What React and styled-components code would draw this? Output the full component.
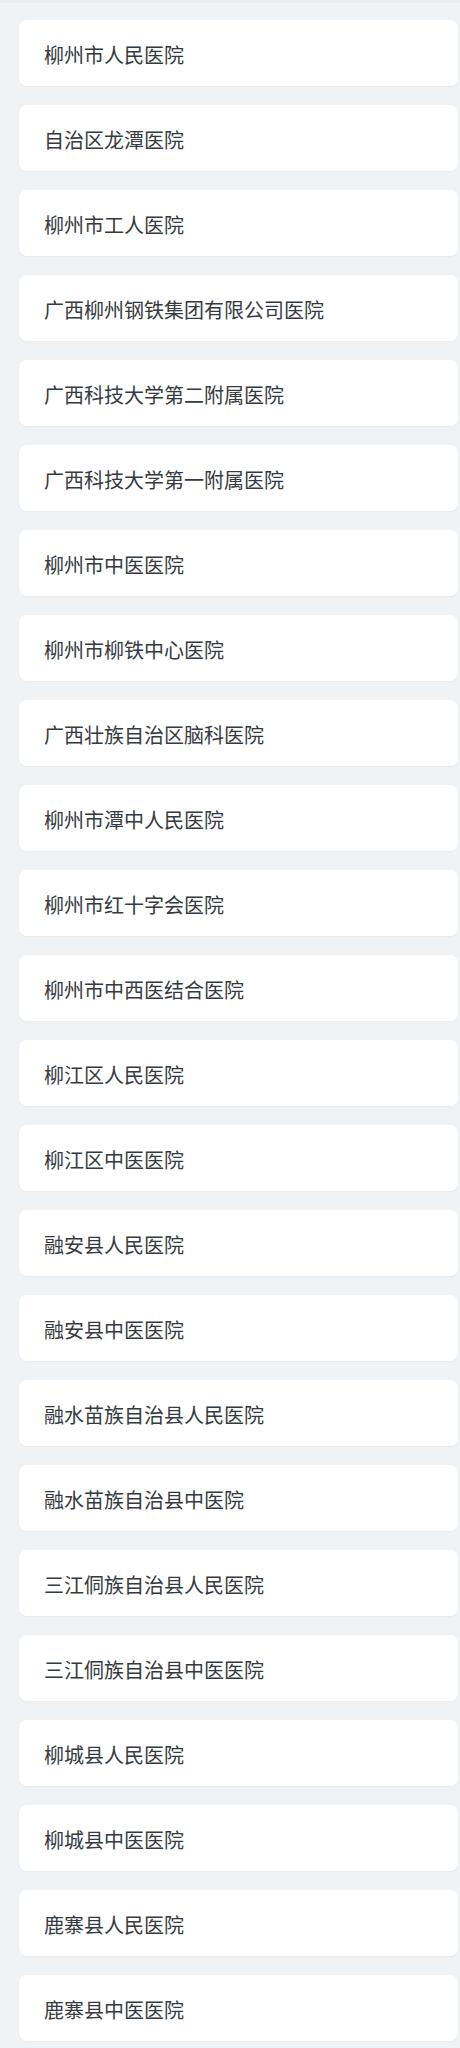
import React from "react";
import styled, { createGlobalStyle } from "styled-components";

const Global = createGlobalStyle`
  html, body { margin: 0; padding: 0; background: #eff3f6; }
  body { font-family: "Noto Sans CJK SC", "Noto Sans", sans-serif; }
`;

const Page = styled.div`
  min-height: 2048px;
  box-sizing: border-box;
  background: #eff3f6;
  border-top: 3px solid #e8edf1;
  padding: 17px 2px 0 19px;
`;

const List = styled.ul`
  list-style: none;
  margin: 0;
  padding: 0;
  display: flex;
  flex-direction: column;
  gap: 19px;
`;

const Card = styled.li`
  height: 66px;
  box-sizing: border-box;
  background: #ffffff;
  border-radius: 8px;
  box-shadow: 0 1px 2px rgba(0, 0, 0, 0.04);
  display: flex;
  align-items: center;
  padding: 3px 0 0 25px;
  font-size: 20px;
  color: #353a40;
  line-height: 1;
`;

const names = [
  "柳州市人民医院",
  "自治区龙潭医院",
  "柳州市工人医院",
  "广西柳州钢铁集团有限公司医院",
  "广西科技大学第二附属医院",
  "广西科技大学第一附属医院",
  "柳州市中医医院",
  "柳州市柳铁中心医院",
  "广西壮族自治区脑科医院",
  "柳州市潭中人民医院",
  "柳州市红十字会医院",
  "柳州市中西医结合医院",
  "柳江区人民医院",
  "柳江区中医医院",
  "融安县人民医院",
  "融安县中医医院",
  "融水苗族自治县人民医院",
  "融水苗族自治县中医院",
  "三江侗族自治县人民医院",
  "三江侗族自治县中医医院",
  "柳城县人民医院",
  "柳城县中医医院",
  "鹿寨县人民医院",
  "鹿寨县中医医院",
];

export default function App() {
  return (
    <>
      <Global />
      <Page>
        <List>
          {names.map((n) => (
            <Card key={n}>{n}</Card>
          ))}
        </List>
      </Page>
    </>
  );
}
